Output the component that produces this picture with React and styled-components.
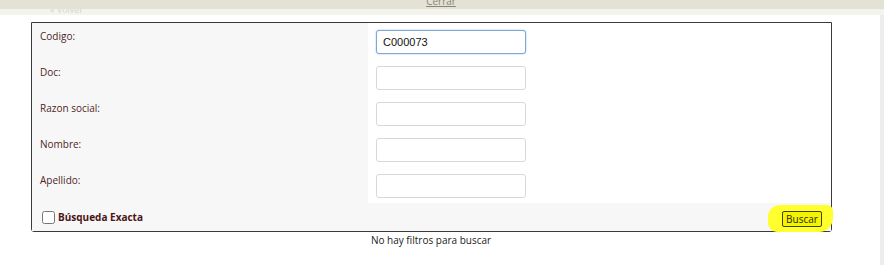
import React from "react"
import styled, { createGlobalStyle } from "styled-components"

const Global = createGlobalStyle`
    body {
        margin: 0;
        background: #ffffff;
        font-family: "Open Sans", "Noto Sans", sans-serif;
    }
`

const fields = [
    { label: "Codigo:", value: "C000073", focused: true },
    { label: "Doc:", value: "" },
    { label: "Razon social:", value: "" },
    { label: "Nombre:", value: "" },
    { label: "Apellido:", value: "" },
]

export default function App() {
    return (
        <Page>
            <Global />
            <TopBar>
                <CloseLink>Cerrar</CloseLink>
            </TopBar>
            <SubBar>
                <Crumb>« Volver</Crumb>
            </SubBar>
            <Body>
                <Panel>
                    {fields.map((f) => (
                        <Row key={f.label}>
                            <LabelCell>{f.label}</LabelCell>
                            <InputCell>
                                <Field defaultValue={f.value} $focused={f.focused} />
                            </InputCell>
                        </Row>
                    ))}
                    <Footer>
                        <Check>
                            <Box type="checkbox" />
                            <span>Búsqueda Exacta</span>
                        </Check>
                        <Highlight>
                            <SearchButton>Buscar</SearchButton>
                        </Highlight>
                    </Footer>
                </Panel>
                <Empty>No hay filtros para buscar</Empty>
                <Scroll />
            </Body>
        </Page>
    )
}

const Page = styled.div`
    width: 884px;
    height: 265px;
    overflow: hidden;
`

const TopBar = styled.div`
    height: 9px;
    background: #e4e1d5;
    display: flex;
    justify-content: center;
    overflow: hidden;
`

const CloseLink = styled.a`
    margin-top: -6px;
    margin-left: -2px;
    font-size: 10px;
    color: #8a8578;
    text-decoration: underline;
`

const SubBar = styled.div`
    height: 6px;
    background: #f4f4ee;
    overflow: hidden;
    padding-left: 50px;
`

const Crumb = styled.span`
    display: block;
    margin-top: -6px;
    font-size: 9px;
    color: #d6d6cf;
`

const Body = styled.div`
    position: relative;
    padding-top: 7px;
`

const Scroll = styled.div`
    position: absolute;
    right: 0;
    top: 0;
    width: 4px;
    height: 250px;
    background: #ededed;
`

const Panel = styled.div`
    margin-left: 31px;
    width: 799px;
    border: 1px solid #3a3a3a;
    border-radius: 0 0 3px 3px;
    background: #ffffff;
`

const Row = styled.div`
    display: grid;
    grid-template-columns: 336px 1fr;
    height: 36px;
`

const LabelCell = styled.div`
    background: #f7f7f7;
    padding: 6px 0 0 8px;
    font-size: 10px;
    color: #4e1f1f;
`

const InputCell = styled.div`
    padding: 6px 0 0 8px;
`

const Field = styled.input`
    box-sizing: border-box;
    width: 150px;
    height: 24px;
    padding: 0 6px;
    border: 1px solid ${(p) => (p.$focused ? "#7fa6d6" : "#d8d8d8")};
    border-radius: 3px;
    box-shadow: ${(p) => (p.$focused ? "0 0 2px #9fc0e8" : "none")};
    font-family: "Liberation Sans", Arial, sans-serif;
    font-size: 11px;
    color: #111111;
    outline: none;
`

const Footer = styled.div`
    display: flex;
    align-items: center;
    justify-content: space-between;
    height: 28px;
    background: #f7f7f7;
    padding: 0 9px 0 10px;
`

const Check = styled.label`
    display: flex;
    align-items: center;
    gap: 3px;
    font-size: 10px;
    font-weight: 700;
    color: #4a1414;
`

const Box = styled.input`
    margin: 0;
    width: 13px;
    height: 13px;
`

const Highlight = styled.div`
    background: #ffff2e;
    border-radius: 12px 6px 14px 9px;
    padding: 6px 11px 5px 14px;
    margin: 2px -11px 0 0;
    display: flex;
`

const SearchButton = styled.button`
    height: 16px;
    width: 40px;
    padding: 0;
    border: 1px solid #444400;
    border-radius: 2px;
    background: #f4f400;
    font-family: "Open Sans", sans-serif;
    font-size: 10px;
    color: #2a2a10;
    line-height: 14px;
`

const Empty = styled.div`
    width: 862px;
    text-align: center;
    margin-top: 1px;
    font-size: 10px;
    color: #222222;
`
